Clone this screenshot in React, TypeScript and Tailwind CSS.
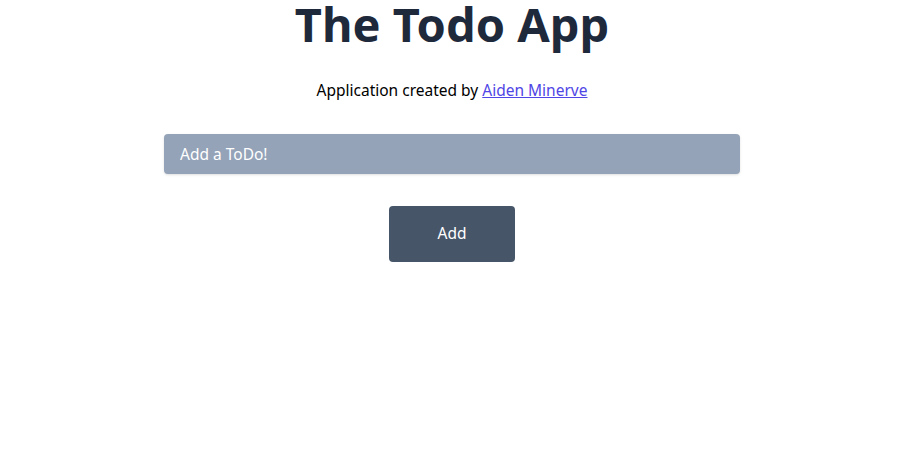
import React from "react";

export default function App() {
  return (
    <div className="min-h-screen bg-white flex flex-col items-center pr-[7px]" style={{ fontFamily: '"Noto Sans", "Open Sans", sans-serif' }}>
      <h1 className="text-[47px] leading-[48px] font-bold text-[#1e293b] mt-0 pt-0">The Todo App</h1>
      <p className="mt-[30px] text-[15.5px] leading-6 text-black">
        Application created by{" "}
        <a href="#" className="text-[#5046e5] underline">Aiden Minerve</a>
      </p>
      <input
        type="text"
        placeholder="Add a ToDo!"
        className="mt-[32px] w-[576px] h-[40px] rounded bg-[#94a3b8] px-4 text-[15.5px] text-white placeholder:text-white shadow-sm outline-none"
      />
      <button className="mt-[32px] w-[126px] h-[56px] rounded bg-[#475569] text-white text-[15.5px]">Add</button>
    </div>
  );
}
